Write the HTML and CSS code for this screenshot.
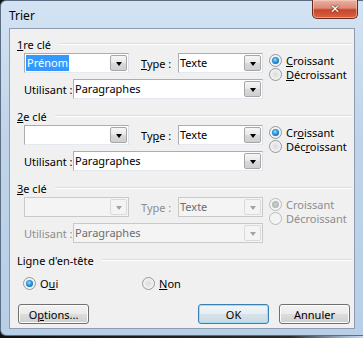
FILE: index.html
```html
<!DOCTYPE html>
<html lang="fr">
<head>
  <meta charset="UTF-8" />
  <title>Trier</title>
  <link rel="stylesheet" href="styles.css">
</head>
<body>
  <div class="window">
    <div class="titlebar">
      <span class="title">Trier</span>
      <div class="close">&#x2715;</div>
    </div>

    <div class="client">
      <!-- 1re clé -->
      <div class="group">
        <div class="group-head"><span><u>1</u>re clé</span><i class="rule"></i></div>
        <div class="group-body">
          <div class="fields">
            <div class="row">
              <div class="combo key"><span class="value"><span class="sel">Prénom</span></span><span class="arrow"></span></div>
              <span class="lbl type"><u>T</u>ype :</span>
              <div class="combo kind"><span class="value">Texte</span><span class="arrow"></span></div>
            </div>
            <div class="row second">
              <span class="lbl using-lbl">Utilisant :</span>
              <div class="combo using"><span class="value">Paragraphes</span><span class="arrow"></span></div>
            </div>
          </div>
          <div class="radios">
            <div class="radio on"><span class="dot"></span><span><u>C</u>roissant</span></div>
            <div class="radio"><span class="dot"></span><span><u>D</u>écroissant</span></div>
          </div>
        </div>
      </div>

      <!-- 2e clé -->
      <div class="group">
        <div class="group-head"><span><u>2</u>e clé</span><i class="rule"></i></div>
        <div class="group-body">
          <div class="fields">
            <div class="row">
              <div class="combo key"><span class="value"></span><span class="arrow"></span></div>
              <span class="lbl type">Ty<u>p</u>e :</span>
              <div class="combo kind"><span class="value">Texte</span><span class="arrow"></span></div>
            </div>
            <div class="row second">
              <span class="lbl using-lbl">Utilisant :</span>
              <div class="combo using"><span class="value">Paragraphes</span><span class="arrow"></span></div>
            </div>
          </div>
          <div class="radios">
            <div class="radio on"><span class="dot"></span><span>Cr<u>o</u>issant</span></div>
            <div class="radio"><span class="dot"></span><span>Déc<u>r</u>oissant</span></div>
          </div>
        </div>
      </div>

      <!-- 3e clé (désactivée) -->
      <div class="group disabled">
        <div class="group-head"><span><u>3</u>e clé</span><i class="rule"></i></div>
        <div class="group-body">
          <div class="fields">
            <div class="row">
              <div class="combo key"><span class="value"></span><span class="arrow"></span></div>
              <span class="lbl type">Type :</span>
              <div class="combo kind"><span class="value">Texte</span><span class="arrow"></span></div>
            </div>
            <div class="row second">
              <span class="lbl using-lbl">Utilisant :</span>
              <div class="combo using"><span class="value">Paragraphes</span><span class="arrow"></span></div>
            </div>
          </div>
          <div class="radios">
            <div class="radio on"><span class="dot"></span><span>Croissant</span></div>
            <div class="radio"><span class="dot"></span><span>Décroissant</span></div>
          </div>
        </div>
      </div>

      <!-- Ligne d'en-tête -->
      <div class="group header-line">
        <div class="group-head"><span>Ligne d'en-tête</span><i class="rule"></i></div>
        <div class="choice-row">
          <div class="radio on oui"><span class="dot"></span><span>O<u>u</u>i</span></div>
          <div class="radio non"><span class="dot"></span><span><u>N</u>on</span></div>
        </div>
      </div>

      <div class="actions">
        <button class="options">O<u>p</u>tions...</button>
        <div class="spacer"></div>
        <button class="default">OK</button>
        <button class="cancel">Annuler</button>
      </div>
    </div>
  </div>
</body>
</html>
```

FILE: styles.css
```css
* {
  box-sizing: border-box;
}

body {
  margin: 0;
  width: 363px;
  height: 338px;
  overflow: hidden;
  font-family: "Noto Sans", sans-serif;
  font-size: 11px;
  color: #000;
  background: linear-gradient(to right, #111 0%, #2a2a2a 80%, #9fb6cf 95%, #c4d7eb 100%);
}

u {
  text-decoration: underline;
  text-underline-offset: 1px;
}

/* window chrome */
.window {
  width: 363px;
  height: 336px;
  display: flex;
  flex-direction: column;
  padding: 0 8px 6px 8px;
  border: 1px solid #5b6e84;
  border-right: none;
  border-radius: 6px 0 0 6px;
  background: linear-gradient(to bottom, #d3e3f3 0%, #bfd4ea 40%, #b8cfe8 100%);
}

.titlebar {
  height: 27px;
  display: flex;
  align-items: flex-start;
  justify-content: space-between;
}

.title {
  font-size: 12px;
  margin-top: 6px;
  color: #000;
}

.close {
  width: 46px;
  height: 19px;
  margin-top: -1px;
  margin-right: -3px;
  border: 1px solid #6b2b22;
  border-top: none;
  border-radius: 0 0 5px 5px;
  background: linear-gradient(to bottom, #eab1a4 0%, #dc8a76 45%, #c8452e 55%, #d4663e 100%);
  box-shadow: inset 0 0 0 1px rgba(255, 220, 210, 0.5);
  color: #fff;
  font-family: "DejaVu Sans", sans-serif;
  font-weight: bold;
  font-size: 12px;
  text-align: center;
  line-height: 18px;
  text-shadow: 0 0 2px #5a1a10, 0 0 1px #5a1a10;
}

.client {
  flex: 1;
  background: #f0f0f0;
  border: 1px solid #8d9cae;
  display: flex;
  flex-direction: column;
}

/* groups */
.group {
  margin-bottom: 11px;
}

.group-head {
  display: flex;
  align-items: center;
  height: 12px;
  margin-top: 9px;
  padding-left: 7px;
  padding-right: 2px;
  white-space: nowrap;
}

.group + .group .group-head {
  margin-top: 0;
}

.rule {
  flex: 1;
  height: 1px;
  margin-left: 8px;
  background: #d5dfe5;
  border-bottom: 1px solid #fff;
  box-sizing: content-box;
}

.group-body {
  display: flex;
  padding-left: 14px;
  margin-top: 3px;
}

.row {
  display: flex;
  align-items: center;
  height: 20px;
}

.row.second {
  margin-top: 6px;
}

.lbl {
  white-space: nowrap;
}

.type {
  width: 37px;
  margin-left: 12px;
}

.using-lbl {
  width: 49px;
}

/* combo boxes */
.combo {
  height: 20px;
  display: flex;
  align-items: center;
  background: #fff;
  border: 1px solid #abadb3;
  border-bottom-color: #e3e9ef;
  border-right-color: #dbdfe6;
}

.key {
  width: 105px;
}

.kind {
  width: 85px;
}

.using {
  width: 190px;
}

.value {
  flex: 1;
  padding-left: 1px;
  height: 16px;
  line-height: 15px;
  white-space: nowrap;
}

.sel {
  display: inline-block;
  height: 16px;
  padding: 0 1px;
  background: #3399ff;
  color: #fff;
}

.arrow {
  width: 17px;
  height: 16px;
  margin-right: 1px;
  border: 1px solid #a6a6a6;
  border-radius: 2px;
  background: linear-gradient(to bottom, #f6f6f6 0%, #e8e8e8 50%, #d9d9d9 51%, #cfcfcf 100%);
  display: flex;
  align-items: center;
  justify-content: center;
}

.arrow::after {
  content: "";
  border-left: 3.5px solid transparent;
  border-right: 3.5px solid transparent;
  border-top: 4px solid #000;
  margin-top: 1px;
}

/* radio buttons */
.radios {
  margin-left: 6px;
}

.radio {
  display: flex;
  align-items: center;
  height: 14px;
  white-space: nowrap;
}

.dot {
  width: 13px;
  height: 13px;
  margin-right: 4px;
  border-radius: 50%;
  border: 1px solid #8f9aa3;
  background: radial-gradient(circle at 50% 50%, #dcdcdc 0%, #eeeeee 55%, #fff 100%);
  display: flex;
  align-items: center;
  justify-content: center;
}

.radio.on .dot::after {
  content: "";
  width: 7px;
  height: 7px;
  border-radius: 50%;
  background: radial-gradient(circle at 45% 40%, #a5e0ff 0%, #2d9ae0 40%, #0c4f8a 100%);
}

.choice-row {
  display: flex;
  align-items: center;
  height: 14px;
  margin-top: 10px;
}

.oui {
  margin-left: 13px;
  width: 119px;
}

.header-line {
  margin-bottom: 0;
}

/* disabled group */
.disabled {
  color: #8d8d8d;
}

.disabled .combo {
  background: #f4f4f4;
  border-color: #c9c9c9;
}

.disabled .value {
  color: #6d6d6d;
}

.disabled .arrow {
  background: #f4f4f4;
  border-color: #dadada;
}

.disabled .arrow::after {
  border-top-color: #a3a3a3;
}

.disabled .dot {
  border-color: #b8bcc0;
  background: #f4f4f4;
}

.disabled .radio.on .dot::after {
  background: radial-gradient(circle, #cfcfcf 0%, #a8a8a8 100%);
}

.disabled .group-head {
  color: #000;
}

/* bottom buttons */
.actions {
  display: flex;
  margin-top: 14px;
  padding-left: 8px;
  padding-right: 4px;
}

.spacer {
  flex: 1;
}

button {
  width: 71px;
  height: 20px;
  padding: 0;
  font-family: inherit;
  font-size: 11px;
  color: #000;
  border: 1px solid #707070;
  border-radius: 3px;
  background: linear-gradient(to bottom, #f2f2f2 0%, #ebebeb 50%, #dddddd 51%, #cfcfcf 100%);
  box-shadow: inset 0 0 0 1px #fcfcfc;
}

.default {
  border-color: #3c7fb1;
  box-shadow: inset 0 0 0 1px #9fdcf7;
  background: linear-gradient(to bottom, #f0f6fa 0%, #e6eef3 50%, #d8e2e9 51%, #cdd8e0 100%);
}

.cancel {
  margin-left: 10px;
}
```
